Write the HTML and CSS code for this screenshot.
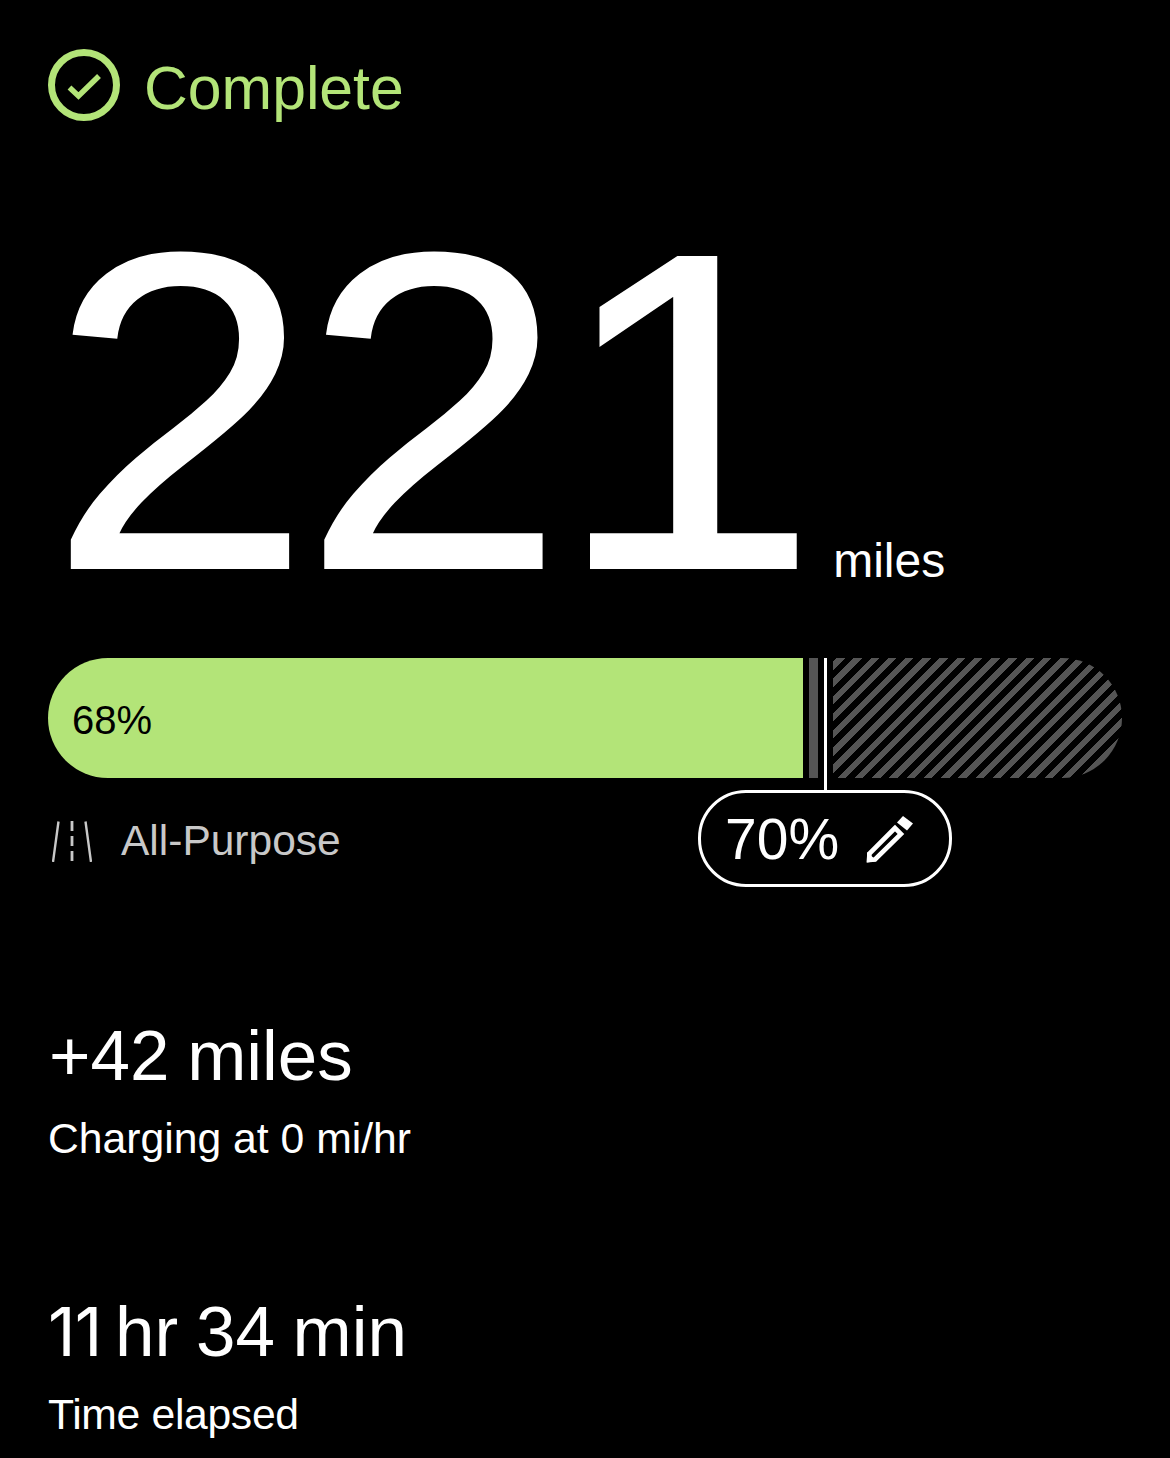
FILE: index.html
```html
<!DOCTYPE html>
<html lang="en">
<head>
<meta charset="utf-8">
<title>Charging complete</title>
<link rel="stylesheet" href="styles.css">
</head>
<body>
<main class="screen">
  <header class="status">
    <svg class="status-icon" viewBox="0 0 72 72" aria-hidden="true">
      <circle cx="36" cy="36" r="32.500" fill="none" stroke="#b3e478" stroke-width="7"/>
      <path d="M21.500 38.500 L30.500 47 L51 27" fill="none" stroke="#b3e478" stroke-width="5.500"/>
    </svg>
    <span class="status-text">Complete</span>
  </header>

  <section class="range">
    <span class="range-value">221</span>
    <span class="range-unit">miles</span>
  </section>

  <section class="battery">
    <div class="track">
      <div class="fill"><span class="fill-label">68%</span></div>
      <div class="buffer"></div>
      <div class="marker-slot"></div>
      <div class="hatch"></div>
    </div>
    <div class="below">
      <div class="profile">
        <svg class="profile-icon" viewBox="0 0 40 41" aria-hidden="true">
          <path d="M6.500 0.500 L1 41 M33.500 0.500 L39 41" fill="none" stroke="#c8c8c8" stroke-width="2.400"/>
          <path d="M20 0 V41" fill="none" stroke="#c8c8c8" stroke-width="2.800" stroke-dasharray="10 5"/>
        </svg>
        <span class="profile-text">All-Purpose</span>
      </div>
    </div>
    <div class="marker-line"></div>
    <div class="limit-pill">
      <span class="limit-text">70%</span>
      <svg class="pencil" viewBox="0 0 48 48" aria-hidden="true">
        <path d="M30 13 L4.500 38.500 L4 45 L10 44.500 L36 19 Z" fill="none" stroke="#fff" stroke-width="4.600"/>
        <path d="M38 1 L48 8.500 L42 15.500 L32 7.500 Z" fill="#fff"/>
        <path d="M2 47.500 V37 L12 46 Z" fill="#fff"/>
      </svg>
    </div>
  </section>

  <section class="stat stat-added">
    <div class="stat-value">+42 miles</div>
    <div class="stat-label">Charging at 0 mi/hr</div>
  </section>

  <section class="stat stat-time">
    <div class="stat-value"><span class="ones">11</span> hr 34 min</div>
    <div class="stat-label">Time elapsed</div>
  </section>
</main>
</body>
</html>
```

FILE: styles.css
```css
* { box-sizing: border-box; }

html, body {
  margin: 0;
  height: 100%;
  background: #000;
}

body {
  overflow: hidden;
  color: #fff;
  font-family: "Liberation Sans", Arial, sans-serif;
}

.screen {
  width: 1170px;
  height: 1458px;
  padding: 49px 48px 0;
}

.status {
  display: flex;
  align-items: center;
  gap: 24px;
  height: 72px;
}

.status-icon {
  width: 72px;
  height: 72px;
  flex: none;
}

.status-text {
  padding-top: 6px;
  font-size: 60.700px;
  line-height: 72px;
  color: #b3e478;
}

.range {
  display: flex;
  align-items: flex-end;
  margin-top: 96px;
  height: 400px;
}

.range-value {
  margin-bottom: 5px;
  font-size: 452px;
  line-height: 400px;
  letter-spacing: -10px;
  -webkit-text-stroke: 2px #fff;
  transform: scaleX(1.05);
  transform-origin: left bottom;
}

.range-unit {
  margin: 0 0 28px 61px;
  font-size: 48px;
  line-height: 56px;
}

.battery {
  position: relative;
  margin-top: 41px;
}

.track {
  display: flex;
  gap: 6px;
  height: 120px;
  border-radius: 60px;
  overflow: hidden;
}

.fill {
  display: flex;
  align-items: center;
  width: 755px;
  padding: 4px 0 0 24px;
  background: #b3e478;
  color: #000;
}

.fill-label {
  font-size: 40px;
}

.buffer {
  width: 9px;
  background: #555;
}

.marker-slot {
  width: 3px;
}

.hatch {
  flex: 1;
  background: repeating-linear-gradient(135deg, #000 0 2.500px, #555 2.500px 8.500px, #000 8.500px 12.190px);
}

.below {
  display: flex;
  height: 126px;
}

.profile {
  display: flex;
  align-items: center;
  gap: 29px;
  padding: 42px 0 0 4px;
  height: 84px;
}

.profile-icon {
  width: 40px;
  height: 41px;
  flex: none;
}

.profile-text {
  font-size: 42.500px;
  color: #c8c8c8;
}

.marker-line {
  position: absolute;
  top: 0;
  left: 776px;
  width: 3px;
  height: 133px;
  background: #fff;
}

.limit-pill {
  position: absolute;
  top: 132px;
  left: 650px;
  display: flex;
  align-items: center;
  gap: 26px;
  width: 254px;
  height: 97px;
  padding-left: 24px;
  background: #000;
  border: 3px solid #fff;
  border-radius: 48px;
}

.limit-text {
  font-size: 57px;
  line-height: 64px;
}

.pencil {
  width: 48px;
  height: 48px;
  flex: none;
}

.stat {
  display: flex;
  flex-direction: column;
}

.stat-added {
  margin-top: 112px;
}

.stat-time {
  margin-top: 127px;
}

.stat-value {
  font-size: 71px;
  line-height: 80px;
  word-spacing: -2px;
}

.stat-added .stat-value {
  padding-left: 1px;
}

.stat-label {
  margin-top: 16px;
  font-size: 42.700px;
  line-height: 52px;
}

.stat-time .stat-label {
  letter-spacing: -0.330px;
}

.ones {
  margin-right: -4px;
  letter-spacing: -1px;
  font-family: "Inter", "Liberation Sans", sans-serif;
  font-size: 68px;
}
```
